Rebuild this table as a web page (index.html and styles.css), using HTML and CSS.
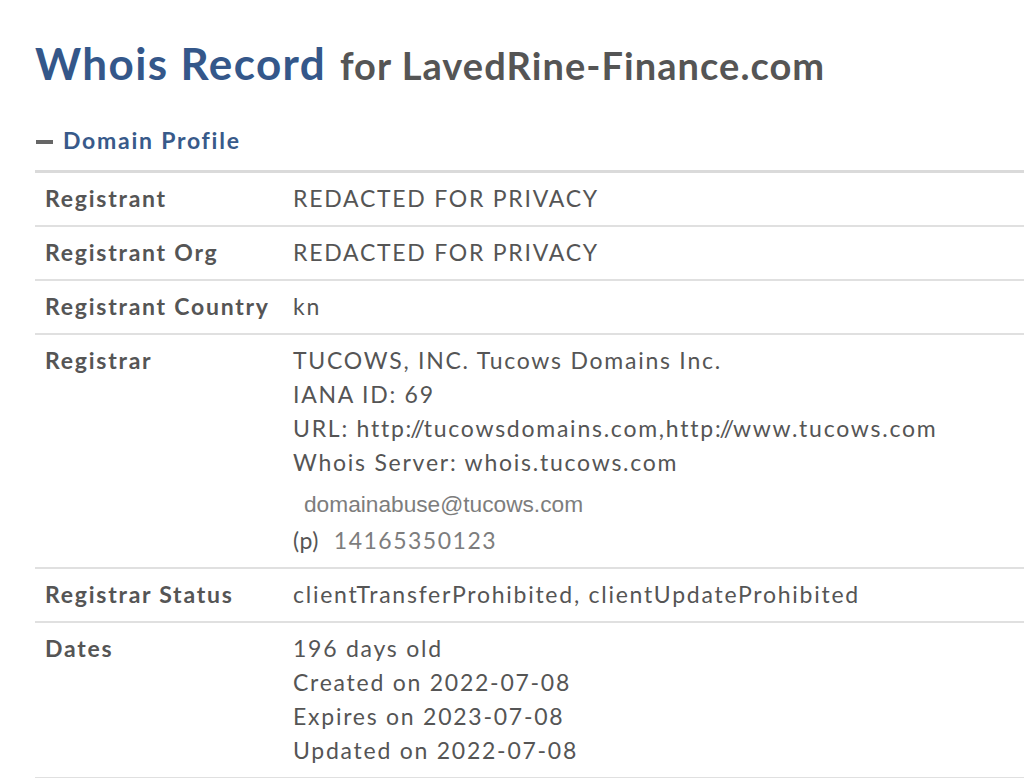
FILE: index.html
```html
<!DOCTYPE html>
<html>
<head>
<meta charset="utf-8">
<link rel="stylesheet" href="styles.css">
</head>
<body>
<div class="page">
  <h1 class="title"><span class="title-main">Whois Record</span> <span class="title-for">for LavedRine-Finance.com</span></h1>
  <div class="section-head"><span class="dash"></span><span class="section-name">Domain Profile</span></div>
  <div class="table">
    <div class="row">
      <div class="label">Registrant</div>
      <div class="value">REDACTED FOR PRIVACY</div>
    </div>
    <div class="row">
      <div class="label">Registrant Org</div>
      <div class="value">REDACTED FOR PRIVACY</div>
    </div>
    <div class="row">
      <div class="label">Registrant Country</div>
      <div class="value">kn</div>
    </div>
    <div class="row">
      <div class="label">Registrar</div>
      <div class="value">
        <div>TUCOWS, INC. Tucows Domains Inc.</div>
        <div>IANA ID: 69</div>
        <div>URL: http<span class="tight">://</span>tucowsdomains.com,http<span class="tight">://</span>www.tucows.com</div>
        <div>Whois Server: whois.tucows.com</div>
        <div class="email">domainabuse@tucows.com</div>
        <div class="phone"><span class="p">(p)</span><span class="num">14165350123</span></div>
      </div>
    </div>
    <div class="row">
      <div class="label">Registrar Status</div>
      <div class="value">clientTransferProhibited, clientUpdateProhibited</div>
    </div>
    <div class="row">
      <div class="label">Dates</div>
      <div class="value">
        <div>196 days old</div>
        <div>Created on 2022-07-08</div>
        <div>Expires on 2023-07-08</div>
        <div>Updated on 2022-07-08</div>
      </div>
    </div>
  </div>
</div>
</body>
</html>
```

FILE: styles.css
```css
html, body {
  margin: 0;
  padding: 0;
  background: #ffffff;
}
body {
  font-family: Lato, "Open Sans", sans-serif;
  color: #555555;
}
.page {
  padding: 33px 0 0 35px;
}
.title {
  margin: 0;
  height: 60px;
  font-size: 44px;
  line-height: 60px;
  font-weight: 700;
  white-space: nowrap;
}
.title-main {
  color: #34578a;
  letter-spacing: 1.4px;
}
.title-for {
  margin-left: 3px;
  font-size: 38px;
  color: #555555;
  letter-spacing: 1.05px;
}
.section-head {
  display: flex;
  align-items: center;
  margin-top: 30px;
  height: 34px;
}
.dash {
  width: 17px;
  height: 4px;
  background: #666666;
  margin: 4px 10px 0 1px;
}
.section-name {
  font-size: 23px;
  line-height: 34px;
  font-weight: 700;
  color: #385a8a;
  letter-spacing: 1.75px;
}
.table {
  margin-top: 13px;
  border-top: 3px solid #dadada;
}
.row {
  display: flex;
  border-bottom: 2px solid #e0e0e0;
  padding: 8px 0 10px 10px;
  font-size: 23px;
  line-height: 34px;
  letter-spacing: 1.75px;
}
.label {
  width: 248px;
  flex: none;
  font-weight: 700;
}
.value {
  flex: 1;
  white-space: nowrap;
}
.tight {
  letter-spacing: -1.1px;
}
.email {
  margin-top: 8px;
  padding-left: 11px;
  font-size: 22.7px;
  color: #7d7d7d;
  letter-spacing: 0;
  font-family: "Liberation Sans", Lato, sans-serif;
}
.phone {
  margin-top: 2px;
  display: flex;
  gap: 15px;
}
.phone .p {
  color: #555555;
  letter-spacing: 0.5px;
}
.phone .num {
  color: #7d7d7d;
  letter-spacing: 1.5px;
}
```
